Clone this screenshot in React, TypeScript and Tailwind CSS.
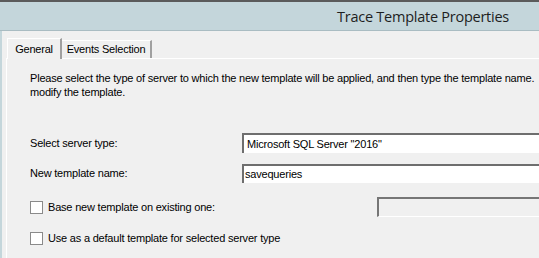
export default function App() {
  return (
    <div className="w-[539px] h-[258px] overflow-hidden bg-[#f0f0f0] flex flex-col [font-family:'Liberation_Sans',Arial,sans-serif] text-[11px] tracking-[-0.2px] text-black">
      {/* Title bar */}
      <div className="h-[31px] shrink-0 bg-[#c4d6db] border-t-2 border-[#5b5b5b] border-b border-b-[#a9bcc2] flex items-center justify-end pr-[30px]">
        <span className="[font-family:'Open_Sans',sans-serif] text-[14.5px] tracking-[-0.25px] text-[#1e1e1e] pt-[1px]">Trace Template Properties</span>
      </div>
      <div className="flex-1 border-l-2 border-[#c4d6db] pl-[4px] pt-[6px] flex flex-col">
        {/* Tabs */}
        <div className="flex items-end h-[21px] pl-[1px]">
          <div className="h-[21px] w-[55px] justify-center bg-[#f0f0f0] border-t border-l border-white border-r-2 border-r-[#a0a0a0] flex items-center relative z-10 -mb-px">
            General
          </div>
          <div className="h-[18px] w-[90px] justify-center border-t border-white border-r-2 border-r-[#a0a0a0] flex items-center">
            Events Selection
          </div>
        </div>
        {/* Panel */}
        <div className="flex-1 border-t border-l border-white pl-[23px] pt-[12px]">
          <p className="leading-[14px] whitespace-nowrap">
            Please select the type of server to which the new template will be applied, and then type the template name.
            <br />
            modify the template.
          </p>
          <div className="mt-[34px] flex items-center h-[20px]">
            <span className="w-[212px]">Select server type:</span>
            <div className="flex-1 h-[20px] bg-white border-t-2 border-l-2 border-[#6e6e6e] pl-[3px] flex items-center whitespace-nowrap">
              Microsoft SQL Server "2016"
            </div>
          </div>
          <div className="mt-[11px] flex items-center h-[19px]">
            <span className="w-[212px]">New template name:</span>
            <div className="flex-1 h-[19px] bg-white border-t-2 border-l-2 border-[#6e6e6e] pl-[1px] flex items-center">
              savequeries
            </div>
          </div>
          <div className="mt-[14px] flex items-center h-[20px]">
            <div className="w-[13px] h-[13px] border border-[#8a8a8a] bg-white shrink-0" />
            <span className="ml-[5px] w-[329px]">Base new template on existing one:</span>
            <div className="flex-1 h-[20px] border-t-2 border-l-2 border-[#767676] border-b border-b-white" />
          </div>
          <div className="mt-[14px] flex items-center h-[14px]">
            <div className="w-[13px] h-[13px] border border-[#8a8a8a] bg-white shrink-0" />
            <span className="ml-[5px]">Use as a default template for selected server type</span>
          </div>
        </div>
      </div>
    </div>
  );
}
